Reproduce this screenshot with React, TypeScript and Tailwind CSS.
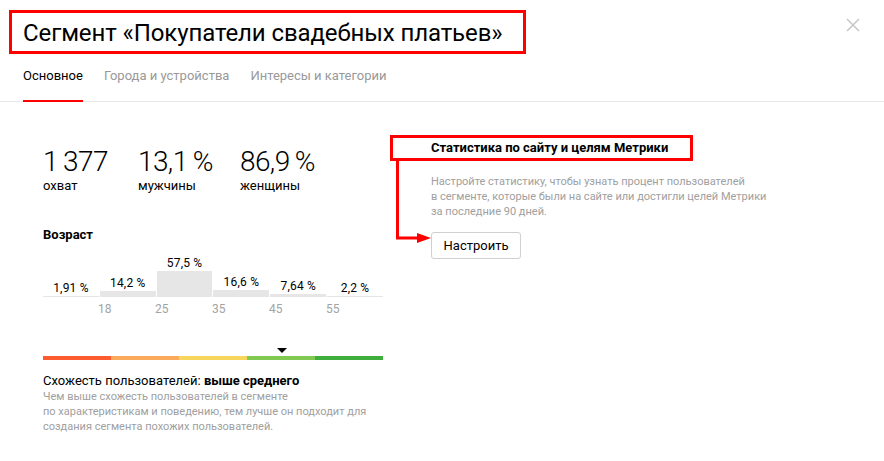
const ages = [
    { label: '1,91 %', value: 1.91 },
    { label: '14,2 %', value: 14.2 },
    { label: '57,5 %', value: 57.5 },
    { label: '16,6 %', value: 16.6 },
    { label: '7,64 %', value: 7.64 },
    { label: '2,2 %', value: 2.2 },
];

const ticks = ['18', '25', '35', '45', '55'];

const stats = [
    { value: '1\u2009377', label: 'охват', width: 'w-[95px]' },
    { value: '13,1\u2009%', label: 'мужчины', width: 'w-[102px]' },
    { value: '86,9\u2009%', label: 'женщины', width: 'w-[120px]' },
];

function CloseIcon() {
    return (
        <svg width="14" height="14" viewBox="0 0 14 14" className="block">
            <path d="M1 1 L13 13 M13 1 L1 13" stroke="#c8c8c8" strokeWidth="1.6" />
        </svg>
    );
}

function AgeChart() {
    return (
        <div className="mt-[12px] w-[340px]">
            <div className="flex h-[42px] items-end gap-px">
                {ages.map((a) => (
                    <div key={a.label} className="flex flex-1 flex-col items-center">
                        <span className="mb-px text-[12px] leading-[14px] tracking-[0.2px] text-black">{a.label}</span>
                        <div
                            className="w-full bg-[#e6e6e6]"
                            style={{ height: Math.max(1, Math.round(a.value * 0.45)) }}
                        />
                    </div>
                ))}
            </div>
            <div className="mt-[5px] flex h-[14px] pl-[55px]">
                {ticks.map((t) => (
                    <span key={t} className="w-[57px] text-[12px] leading-[14px] text-[#a3a3a3]">
                        {t}
                    </span>
                ))}
            </div>
        </div>
    );
}

function SimilarityScale() {
    return (
        <div className="relative mt-[40px] flex h-[4px] w-[340px]">
            <div className="flex-1 bg-[#fd5c2f]" />
            <div className="flex-1 bg-[#fbaa5c]" />
            <div className="flex-1 bg-[#f8d65c]" />
            <div className="flex-1 bg-[#82c952]" />
            <div className="flex-1 bg-[#3eae3c]" />
            <div className="absolute -top-[8px] left-[234px] h-0 w-0 border-l-[5px] border-r-[5px] border-t-[5px] border-l-transparent border-r-transparent border-t-black" />
        </div>
    );
}

export default function App() {
    return (
        <div className="relative h-[461px] w-[884px] overflow-hidden bg-white font-['Roboto','Liberation_Sans',sans-serif] text-black">
            <div className="pl-[9px] pt-[10px]">
                <div className="flex h-[44px] w-[517px] items-center border-[3px] border-[#ff0000] pl-[11px] pt-px">
                    <h1 className="text-[24px] leading-[28px] font-normal tracking-[-0.1px]">Сегмент «Покупатели свадебных платьев»</h1>
                </div>
            </div>

            <button className="absolute right-[24px] top-[18px]">
                <CloseIcon />
            </button>

            <div className="mt-[14px] flex gap-[21px] border-b border-[#e8e8e8] pl-[23px]">
                <div className="-mb-px border-b-2 border-[#ff0000] pb-[16px] text-[13px] leading-[16px] text-black">Основное</div>
                <div className="-mb-px border-b-2 border-transparent pb-[16px] text-[13px] leading-[16px] text-[#999]">Города и устройства</div>
                <div className="-mb-px border-b-2 border-transparent pb-[16px] text-[13px] leading-[16px] text-[#999]">Интересы и категории</div>
            </div>

            <div className="flex">
                <div className="w-[383px] pl-[43px] pt-[44px]">
                    <div className="flex">
                        {stats.map((s) => (
                            <div key={s.label} className={s.width}>
                                <div className="text-[28px] leading-[32px] font-light tracking-[-0.6px]">{s.value}</div>
                                <div className="text-[13px] leading-[16px]">{s.label}</div>
                            </div>
                        ))}
                    </div>

                    <div className="mt-[33px] text-[13px] leading-[16px] font-bold">Возраст</div>
                    <AgeChart />

                    <SimilarityScale />

                    <div className="mt-[13px] text-[13px] leading-[16px]">
                        Схожесть пользователей: <span className="font-bold">выше среднего</span>
                    </div>
                    <p className="text-[11px] leading-[15px] text-[#a0a0a0]">
                        Чем выше схожесть пользователей в сегменте
                        <br />
                        по характеристикам и поведению, тем лучше он подходит для
                        <br />
                        создания сегмента похожих пользователей.
                    </p>
                </div>

                <div className="ml-[7px] pt-[33px]">
                    <div className="flex h-[26px] w-[303px] items-center border-[3px] border-[#ff0000] pl-[38px]">
                        <span className="text-[13px] leading-[16px] font-bold">Статистика по сайту и целям Метрики</span>
                    </div>
                    <p className="ml-[41px] mt-[13px] text-[11px] leading-[15px] text-[#a0a0a0]">
                        Настройте статистику, чтобы узнать процент пользователей
                        <br />
                        в сегменте, которые были на сайте или достигли целей Метрики
                        <br />
                        за последние 90 дней.
                    </p>
                    <button className="ml-[41px] mt-[13px] h-[27px] w-[90px] rounded-[3px] border border-[#d0d0d0] bg-white text-[13px] leading-[16px]">
                        Настроить
                    </button>
                </div>
            </div>

            <svg className="absolute left-[394px] top-[160px]" width="40" height="86" viewBox="0 0 40 86">
                <path d="M3.5 0 V78 H26" fill="none" stroke="#ff0000" strokeWidth="3" />
                <path d="M23 73 L37 78 L23 83 Z" fill="#ff0000" />
            </svg>
        </div>
    );
}
